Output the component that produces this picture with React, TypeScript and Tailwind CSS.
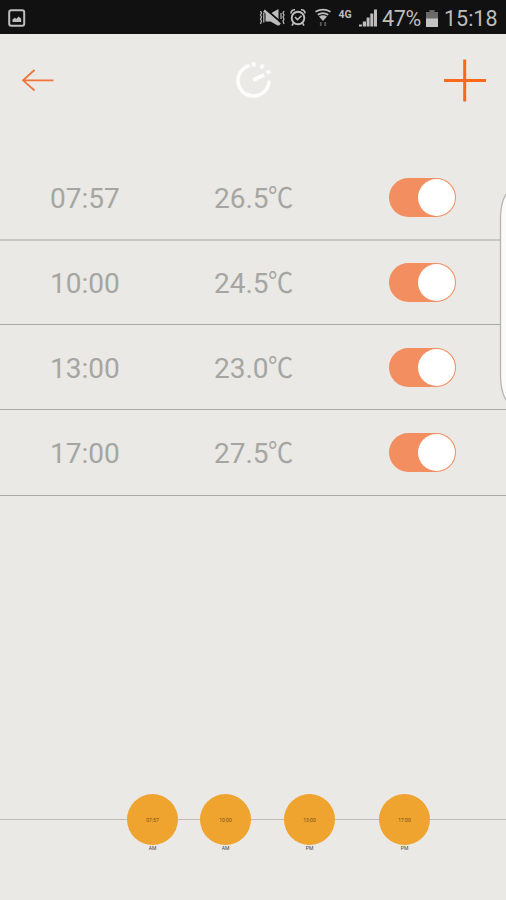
const schedule = [
  { time: "07:57", temp: "26.5", row: "h-[86px] border-b-2 border-[#c5c5c2]" },
  { time: "10:00", temp: "24.5", row: "h-[84px] border-b border-[#a9a9a7] pb-px" },
  { time: "13:00", temp: "23.0", row: "h-[85px] border-b border-[#a9a9a7]" },
  { time: "17:00", temp: "27.5", row: "h-[86px] border-b border-[#a9a9a7] pb-px" },
];

const marks = [
  { time: "07:57", period: "AM", offset: "ml-[127px]" },
  { time: "10:00", period: "AM", offset: "ml-[22px]" },
  { time: "13:00", period: "PM", offset: "ml-[33px]" },
  { time: "17:00", period: "PM", offset: "ml-[44px]" },
];

function StatusBar() {
  return (
    <div className="flex h-[34px] items-center bg-[#111111] text-[#bdbdbd]">
      <svg className="ml-2 mt-px h-[18px] w-[18px]" viewBox="0 0 18 18" fill="none">
        <rect x="1.2" y="1.2" width="15" height="15.6" rx="2" stroke="currentColor" strokeWidth="2" />
        <path d="M4.5 13v-2.5l2.3-1.8 1.8 1 2-2.2 2.6 2.3V13z" fill="currentColor" />
      </svg>

      {/* Vibrate, alarm, wifi, network, signal */}
      <svg className="ml-[233px] h-[34px] w-[119px] shrink-0" viewBox="259 0 119 34" fill="none" stroke="currentColor">
        <path d="M260.5 11l1 2-1 2 1 2-1 2 1 2-1 3M263.8 12.5v10M284 11l-1 2 1 2-1 2 1 2-1 2 1 3M281 13v6" strokeWidth="1.2" />
        <path d="M265.5 13.5h5l8-4.5v17l-8-4.5h-5z" fill="currentColor" stroke="none" />
        <path d="M266 9.5l14 12" stroke="#111111" strokeWidth="2" />
        <path d="M264 10.5l16 14" strokeWidth="2.4" />
        <circle cx="298" cy="18" r="6.3" strokeWidth="1.9" />
        <path d="M291 13.5a3.5 3.5 0 0 1 4-3.7M305 13.5a3.5 3.5 0 0 0-4-3.7M293.5 23l-1.5 2.7M302.5 23l1.5 2.7M295 17l2.5 2.7 4-4" strokeWidth="1.6" />
        <path d="M315.5 11.8q7.5-4.5 15 0M317.8 14.8q5.2-3.4 10.4 0" strokeWidth="1.8" />
        <path d="M319 16.5q4-2.5 8 0l-4 4.5z" fill="currentColor" stroke="none" />
        <path d="M320.8 22v4M325.2 22v4" stroke="#585858" strokeWidth="1.8" />
        <path d="M359 24.5h3v2h-3zM362.8 21.5h3.2v5h-3.2zM366.6 17.5h3v9h-3zM370.3 13.5h3v13h-3zM374 9.5h3v17h-3z" fill="currentColor" stroke="none" />
        <text x="338.5" y="18" fill="currentColor" stroke="none" className="font-[Roboto,sans-serif] text-[10.5px] font-bold">4G</text>
      </svg>

      <span className="ml-1 mt-[3px] w-[44px] text-[21.5px] leading-none tracking-[-0.3px]">47%</span>
      <svg className="mt-[2px] h-[17px] w-3 shrink-0" viewBox="0 0 12 17">
        <path d="M3.5 0h5v2H12v7H0V2h3.5z" fill="#696969" />
        <path d="M0 8.5h12V17H0z" fill="#c4c4c4" />
      </svg>
      <span className="ml-[6px] mt-[3px] text-[21.5px] leading-none">15:18</span>
    </div>
  );
}

function Header() {
  return (
    <header className="flex h-[121px] items-start pl-[21px] pr-[19px] pt-6">
      <svg className="mt-[10px] h-6 w-[34px]" viewBox="0 0 34 24" fill="none" stroke="#f0743a" strokeWidth="1.7">
        <path d="M32.5 12.3H2M13.5 2L2 12.3l11.5 10.2" />
      </svg>
      <svg className="ml-[178px] mt-[2px] h-10 w-10" viewBox="233 60 40 40" fill="none" stroke="#fcfcfb">
        <path d="M249.5 65.5A15.5 15.5 0 1 0 269 80.5" strokeWidth="3.6" />
        <path d="M253 80.3l11-5.3" strokeWidth="4" />
        <path d="M253.7 62.2v4.5M263.3 64.8l-2.4 3.5M270.2 71l-3.6 2.2" strokeWidth="3.8" />
      </svg>
      <svg className="ml-auto h-[44px] w-[44px]" viewBox="0 0 44 44" stroke="#fa681c" strokeWidth="3">
        <path d="M1 22.5h42M21.7 1.5v42" />
      </svg>
    </header>
  );
}

function Toggle() {
  return (
    <button
      type="button"
      role="switch"
      aria-checked="true"
      className="flex h-[39px] w-[67px] items-center justify-end rounded-full bg-[#f38e60] pr-px"
    >
      <span className="h-[37px] w-[37px] rounded-full bg-white" />
    </button>
  );
}

function Timeline() {
  return (
    <div className="relative mt-auto h-[106px]">
      <div className="absolute inset-x-0 top-[25px] h-px bg-[#bcbcb8]" />
      <div className="relative flex">
        {marks.map((mark) => (
          <div key={mark.time} className={`${mark.offset} flex w-[51px] flex-col items-center`}>
            <div className="flex h-[51px] w-[51px] items-center justify-center rounded-full bg-[#eea42f] pt-[2px] text-[5px] leading-none text-[#755018]">
              {mark.time}
            </div>
            <span className="text-[5px] leading-[6px] text-[#444444]">{mark.period}</span>
          </div>
        ))}
      </div>
    </div>
  );
}

export default function App() {
  return (
    <div className="relative flex h-[900px] w-[506px] flex-col overflow-hidden bg-[#eae9e5] font-[Roboto,'Noto_Sans_CJK_SC',sans-serif]">
      <StatusBar />
      <Header />

      <ul>
        {schedule.map((item) => (
          <li
            key={item.time}
            className={`${item.row} flex items-center pl-[50px] text-[28px] leading-none text-[#a5a6a3]`}
          >
            <span className="mt-[3px] w-[164px]">{item.time}</span>
            <span className="mt-[3px] w-[175px] whitespace-nowrap">
              {item.temp}
              <span className="-ml-px inline-block origin-left scale-x-90">℃</span>
            </span>
            <Toggle />
          </li>
        ))}
      </ul>

      <Timeline />

      {/* Edge panel handle peeking in from the right */}
      <svg className="absolute right-0 top-[190px] h-[216px] w-[8px]" viewBox="0 0 8 216">
        <path d="M8 4Q2.5 13 2.5 29V185Q2.5 201 8 210" fill="#fafafa" stroke="#b4b4b1" strokeWidth="1.3" />
      </svg>
    </div>
  );
}
